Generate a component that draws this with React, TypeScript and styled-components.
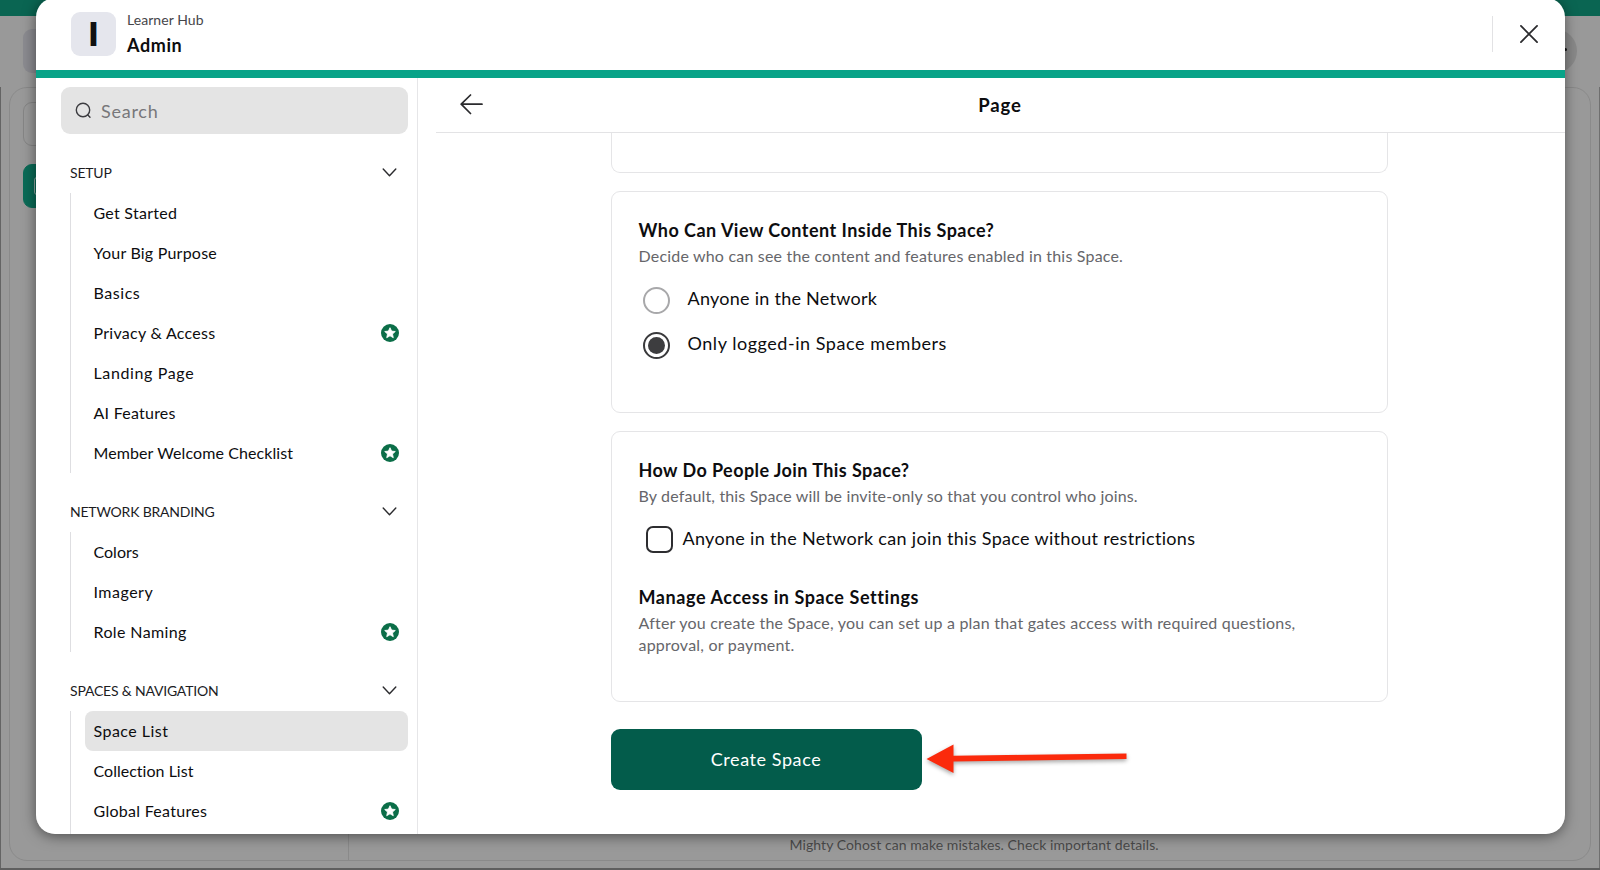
import React from "react";
import styled, { createGlobalStyle } from "styled-components";

const GlobalStyle = createGlobalStyle`
  *, *::before, *::after { box-sizing: border-box; }
  html, body { margin: 0; padding: 0; background: #999; }
  body { font-family: Lato, "Open Sans", sans-serif; color: #0d0d0f; overflow: hidden; }
  h1, h2, h3, p { margin: 0; font: inherit; }
  button { font: inherit; border: 0; padding: 0; background: none; color: inherit; }
`;

const Screen = styled.div`
  position: relative;
  width: 1600px;
  height: 870px;
  overflow: hidden;
  background: #999;
`;

/* Dimmed page behind the dialog */
const Backdrop = styled.div`
  display: flex;
  flex-direction: column;
  height: 870px;
  border-bottom: 2px solid #5f5f5f;
`;
const BrandStrip = styled.div`
  height: 16px;
  background: #0a6552;
`;
const BackdropBar = styled.div`
  height: 71px;
  padding: 13px 23px 0;
  display: flex;
  justify-content: space-between;
`;
const DimTile = styled.div`
  width: 44px;
  height: 44px;
  border-radius: 9px;
  background: #8b8b90;
`;
const DimCircle = styled.div`
  width: 44px;
  height: 44px;
  border-radius: 50%;
  background: #898989;
  padding: 19px 0 0 31px;
`;
const Dot = styled.div`
  width: 3px;
  height: 3px;
  border-radius: 50%;
  background: #111;
`;
const BackdropBody = styled.div`
  flex: 1;
  padding: 0 8px 7px 8px;
  border-left: 1px solid #646464;
  border-right: 1px solid #6f6f6f;
`;
const BackdropFrame = styled.div`
  height: 100%;
  display: flex;
  border: 1px solid #8a8a8a;
  border-radius: 18px;
`;
const BackdropNav = styled.div`
  width: 339px;
  padding: 14px 13px;
  border-right: 1px solid #8a8a8a;
  display: flex;
  flex-direction: column;
  gap: 18px;
`;
const DimField = styled.div<{ $active?: boolean }>`
  height: 44px;
  border-radius: 9px;
  border: 1px solid ${(p) => (p.$active ? "#0a6b57" : "#858585")};
  background: ${(p) => (p.$active ? "#0a6b57" : "transparent")};
  display: flex;
  align-items: center;
  padding-left: 10px;
`;
const DimGlyph = styled.span`
  width: 18px;
  height: 18px;
  border-radius: 3px;
  border: 1.5px solid #8fa9a2;
`;
const BackdropMain = styled.div`
  flex: 1;
  display: flex;
  align-items: flex-end;
  padding: 0 0 5px 440.5px;
`;
const Disclaimer = styled.p`
  font-size: 14px;
  line-height: 20px;
  letter-spacing: 0.08px;
  color: #4a4a4a;
  white-space: nowrap;
`;

/* Dialog */
const Dialog = styled.section`
  position: absolute;
  left: 35.5px;
  top: -2px;
  width: 1529px;
  height: 836px;
  border-radius: 19px;
  background: #fff;
  overflow: hidden;
  display: flex;
  flex-direction: column;
`;
const DialogShadow = styled.div`
  position: absolute;
  left: 36px;
  top: -2px;
  width: 1528px;
  height: 836px;
  border-radius: 19px;
  box-shadow: 0 2px 14px rgba(0, 0, 0, 0.5);
`;
const DialogHeader = styled.header`
  height: 80px;
  padding: 14px 27px 0 35.5px;
  border-bottom: 8px solid #08a388;
  display: flex;
  justify-content: space-between;
`;
const Identity = styled.div`
  display: flex;
  gap: 11px;
`;
const Avatar = styled.div`
  width: 45px;
  height: 44px;
  border-radius: 9px;
  background: #e5e6ed;
  display: flex;
  align-items: center;
  justify-content: center;
  font: 800 33px/44px Inter, sans-serif;
  color: #111;
`;
const NetworkName = styled.p`
  margin-top: -1px;
  font-size: 14px;
  line-height: 18px;
  letter-spacing: 0.06px;
  color: #46464a;
`;
const AdminTitle = styled.h1`
  padding-top: 5px;
  font-size: 18px;
  font-weight: 700;
  line-height: 22px;
  letter-spacing: 0.6px;
`;
const HeaderActions = styled.div`
  display: flex;
  align-items: center;
  height: 36px;
  margin-top: 4px;
  padding-left: 27px;
  border-left: 1px solid #e2e2e4;
`;
const CloseButton = styled.button`
  display: flex;
  width: 18px;
  height: 18px;
`;

const DialogBody = styled.div`
  flex: 1;
  min-height: 0;
  display: flex;
`;
const Sidebar = styled.aside`
  width: 382px;
  padding: 9px 9px 0 25.5px;
  border-right: 1px solid #e6e6e8;
`;
const SearchBox = styled.div`
  height: 47px;
  border-radius: 9px;
  background: #e4e4e4;
  display: flex;
  align-items: center;
  gap: 9px;
  padding-left: 14px;
  font-size: 18px;
  letter-spacing: 0.75px;
  color: #77777a;
`;
const GroupHeader = styled.div`
  height: 59px;
  padding: 18px 11px 0 9px;
  display: flex;
  justify-content: space-between;
  align-items: center;
`;
const GroupTitle = styled.h2`
  font-size: 14px;
  line-height: 20px;
  letter-spacing: -0.2px;
  color: #1c1c1f;
`;
const GroupList = styled.div`
  margin-left: 9px;
  padding-left: 14px;
  border-left: 1px solid #dedee1;
`;
const NavItem = styled.div<{ $selected?: boolean }>`
  height: 40px;
  padding: 0 9px 0 9px;
  border-radius: 8px;
  background: ${(p) => (p.$selected ? "#e4e4e4" : "transparent")};
  display: flex;
  justify-content: space-between;
  align-items: center;
`;
const NavLabel = styled.span<{ $track: number }>`
  margin-left: -0.5px;
  padding-bottom: 2px;
  font-size: 16px;
  letter-spacing: ${(p) => p.$track}px;
`;

const Main = styled.main`
  flex: 1;
  display: flex;
  flex-direction: column;
  padding-left: 18px;
`;
const PageHeader = styled.div`
  height: 55px;
  flex: none;
  display: grid;
  grid-template-columns: 1fr auto 1fr;
  align-items: center;
  padding: 0 0 1px 24px;
  border-bottom: 1px solid #e3e3e5;
`;
const PageTitle = styled.h2`
  font-size: 18.5px;
  font-weight: 700;
  line-height: 24px;
  letter-spacing: 0.9px;
  padding: 1px 24px 0 0;
`;
const Content = styled.div`
  flex: 1;
  min-height: 0;
  width: 777.5px;
  margin-left: 175px;
  display: flex;
  flex-direction: column;
  overflow: hidden;
`;
const Card = styled.section<{ $height: number }>`
  height: ${(p) => p.$height}px;
  flex: none;
  margin-bottom: 18px;
  padding: 25px 27px 0;
  border: 1px solid #e5e5e7;
  border-radius: 9px;
`;
const ScrolledCard = styled(Card)`
  border-top: 0;
  border-top-left-radius: 0;
  border-top-right-radius: 0;
`;
const CardTitle = styled.h3<{ $track: number }>`
  font-size: 18px;
  font-weight: 700;
  line-height: 26px;
  letter-spacing: ${(p) => p.$track}px;
`;
const CardText = styled.p<{ $track: number }>`
  font-size: 16px;
  line-height: 22.5px;
  padding-top: 2px;
  letter-spacing: ${(p) => p.$track}px;
  color: #66666a;
`;
const Option = styled.label<{ $top: number }>`
  display: flex;
  align-items: center;
  height: 28px;
  margin-top: ${(p) => p.$top}px;
  font-size: 18px;
`;
const OptionLabel = styled.span<{ $gap: number; $track: number; $lift?: number }>`
  margin-left: ${(p) => p.$gap}px;
  padding-bottom: ${(p) => p.$lift ?? 4}px;
  letter-spacing: ${(p) => p.$track}px;
`;
const Radio = styled.span<{ $checked?: boolean }>`
  width: 27px;
  height: 27px;
  margin-left: 4px;
  border-radius: 50%;
  border: 2px solid ${(p) => (p.$checked ? "#3a3a3c" : "#a8a8aa")};
  display: flex;
  align-items: center;
  justify-content: center;
  &::after {
    content: "";
    width: 17px;
    height: 17px;
    border-radius: 50%;
    background: ${(p) => (p.$checked ? "#3d3d3f" : "transparent")};
  }
`;
const Checkbox = styled.span`
  width: 27px;
  height: 27px;
  margin-left: 7.5px;
  border: 2px solid #2d2d30;
  border-radius: 7px;
`;
const Subsection = styled.div`
  margin-top: 30px;
`;
const ActionRow = styled.div`
  display: flex;
  padding-top: 9px;
  gap: 4.5px;
`;
const CreateButton = styled.button`
  width: 311px;
  height: 61px;
  padding-bottom: 2px;
  border-radius: 9px;
  background: #035c4b;
  color: #fff;
  font-size: 18px;
  letter-spacing: 0.58px;
`;
const Pointer = styled.svg`
  margin-top: 12px;
  overflow: visible;
  filter: drop-shadow(0 2px 2px rgba(0, 0, 0, 0.35));
`;

const SearchIcon = () => (
  <svg width="17" height="17" viewBox="0 0 17 17" fill="none" stroke="#3c3c40" strokeWidth="1.4" strokeLinecap="round">
    <circle cx="8" cy="8" r="6.7" />
    <path d="M12.6 12.8 15 15.3" />
  </svg>
);
const Chevron = () => (
  <svg width="15" height="9" viewBox="0 0 15 9" fill="none" stroke="#2b2b2e" strokeWidth="1.4" strokeLinecap="round" strokeLinejoin="round">
    <path d="M1.2 1 7.5 7.8 13.8 1" />
  </svg>
);
const CloseIcon = () => (
  <svg width="18" height="18" viewBox="0 0 19 19" fill="none" stroke="#2b2b2e" strokeWidth="1.9" strokeLinecap="round">
    <path d="M1 1 18 18M18 1 1 18" />
  </svg>
);
const BackIcon = () => (
  <svg width="23" height="21" viewBox="0 0 23 21" fill="none" stroke="#2b2b2e" strokeWidth="1.7" strokeLinecap="round" strokeLinejoin="round">
    <path d="M10.5 1 1.2 10.2 10.5 19.5M1.2 10.2H22" />
  </svg>
);
const StarBadge = () => (
  <svg width="18" height="18" viewBox="0 0 18 18">
    <circle cx="9" cy="9" r="9" fill="#0b6e48" />
    <path
      d="M9 3.7 10.6 7.1 14.3 7.5 11.5 10 12.3 13.7 9 11.8 5.7 13.7 6.5 10 3.7 7.5 7.4 7.1Z"
      fill="#fff" stroke="#fff" strokeWidth="0.8" strokeLinejoin="round"
    />
  </svg>
);

type Item = { label: string; track: number; starred?: boolean; selected?: boolean };
const groups: { title: string; items: Item[] }[] = [
  {
    title: "SETUP",
    items: [
      { label: "Get Started", track: 0.26 },
      { label: "Your Big Purpose", track: 0.22 },
      { label: "Basics", track: 0.55 },
      { label: "Privacy & Access", track: 0.27, starred: true },
      { label: "Landing Page", track: 0.63 },
      { label: "AI Features", track: 0.24 },
      { label: "Member Welcome Checklist", track: 0.1, starred: true },
    ],
  },
  {
    title: "NETWORK BRANDING",
    items: [
      { label: "Colors", track: 0 },
      { label: "Imagery", track: 0.5 },
      { label: "Role Naming", track: 0.38, starred: true },
    ],
  },
  {
    title: "SPACES & NAVIGATION",
    items: [
      { label: "Space List", track: 0.47, selected: true },
      { label: "Collection List", track: 0.02 },
      { label: "Global Features", track: 0.28, starred: true },
    ],
  },
];

export default function App() {
  return (
    <Screen>
      <GlobalStyle />
      <Backdrop>
        <BrandStrip />
        <BackdropBar>
          <DimTile />
          <DimCircle><Dot /></DimCircle>
        </BackdropBar>
        <BackdropBody>
          <BackdropFrame>
            <BackdropNav>
              <DimField />
              <DimField $active><DimGlyph /></DimField>
            </BackdropNav>
            <BackdropMain>
              <Disclaimer>Mighty Cohost can make mistakes. Check important details.</Disclaimer>
            </BackdropMain>
          </BackdropFrame>
        </BackdropBody>
      </Backdrop>

      <DialogShadow />
      <Dialog>
        <DialogHeader>
          <Identity>
            <Avatar>I</Avatar>
            <div>
              <NetworkName>Learner Hub</NetworkName>
              <AdminTitle>Admin</AdminTitle>
            </div>
          </Identity>
          <HeaderActions>
            <CloseButton aria-label="Close"><CloseIcon /></CloseButton>
          </HeaderActions>
        </DialogHeader>
        <DialogBody>
          <Sidebar>
            <SearchBox><SearchIcon />Search</SearchBox>
            {groups.map((group, index) => (
              <nav key={group.title}>
                <GroupHeader>
                  <GroupTitle>{group.title}</GroupTitle>
                  <Chevron />
                </GroupHeader>
                <GroupList>
                  {group.items.map((item) => (
                    <NavItem key={item.label} $selected={item.selected}>
                      <NavLabel $track={item.track}>{item.label}</NavLabel>
                      {item.starred && <StarBadge />}
                    </NavItem>
                  ))}
                  {index === groups.length - 1 && <NavItem />}
                </GroupList>
              </nav>
            ))}
          </Sidebar>
          <Main>
            <PageHeader>
              <BackIcon />
              <PageTitle>Page</PageTitle>
            </PageHeader>
            <Content>
              <ScrolledCard $height={40} />
              <Card $height={222}>
                <CardTitle $track={0.48}>Who Can View Content Inside This Space?</CardTitle>
                <CardText $track={0.19}>Decide who can see the content and features enabled in this Space.</CardText>
                <Option $top={19}>
                  <Radio />
                  <OptionLabel $gap={18} $track={0.26} $lift={6}>Anyone in the Network</OptionLabel>
                </Option>
                <Option $top={17}>
                  <Radio $checked />
                  <OptionLabel $gap={18} $track={0.54} $lift={6}>Only logged-in Space members</OptionLabel>
                </Option>
              </Card>
              <Card $height={271}>
                <CardTitle $track={0.42}>How Do People Join This Space?</CardTitle>
                <CardText $track={0.15}>By default, this Space will be invite-only so that you control who joins.</CardText>
                <Option $top={18}>
                  <Checkbox />
                  <OptionLabel $gap={9.5} $track={0.32}>Anyone in the Network can join this Space without restrictions</OptionLabel>
                </Option>
                <Subsection>
                  <CardTitle $track={0.58}>Manage Access in Space Settings</CardTitle>
                  <CardText $track={0.22}>
                    After you create the Space, you can set up a plan that gates access with required questions,
                    <br />
                    approval, or payment.
                  </CardText>
                </Subsection>
              </Card>
              <ActionRow>
                <CreateButton>Create Space</CreateButton>
                <Pointer width="202" height="36" viewBox="0 0 202 36">
                  <path d="M0.5 18 27.5 3.5V14.8L200.5 12.5V18.1L27.5 20.5V32Z" fill="#fb2a0c" />
                </Pointer>
              </ActionRow>
            </Content>
          </Main>
        </DialogBody>
      </Dialog>
    </Screen>
  );
}
